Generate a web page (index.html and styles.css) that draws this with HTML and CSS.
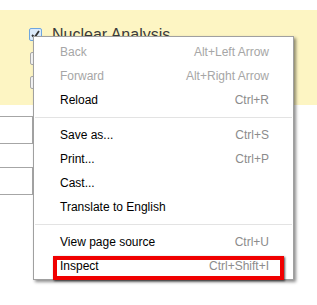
FILE: index.html
```html
<!DOCTYPE html>
<html lang="en">
<head>
    <meta charset="UTF-8">
    <meta name="viewport" content="width=device-width, initial-scale=1.0">
    <title>Context menu</title>
    <link rel="stylesheet" href="styles.css">
</head>
<body>
    <div class="page">
        <div class="panel">
            <label class="option">
                <span class="check checked">
                    <svg width="11" height="11" viewBox="0 0 11 11"><path d="M2 6 L4.5 8.5 L9 2" fill="none" stroke="#333" stroke-width="1.8"/></svg>
                </span>
                <span class="option-text">Nuclear Analysis</span>
            </label>
            <label class="option"><span class="check"></span></label>
            <label class="option"><span class="check"></span></label>
        </div>

        <div class="fields">
            <div class="field"></div>
            <div class="field"></div>
        </div>

        <div class="menu">
            <div class="item disabled"><span>Back</span><span class="key">Alt+Left Arrow</span></div>
            <div class="item disabled"><span>Forward</span><span class="key">Alt+Right Arrow</span></div>
            <div class="item"><span>Reload</span><span class="key">Ctrl+R</span></div>
            <div class="sep"></div>
            <div class="item"><span>Save as...</span><span class="key">Ctrl+S</span></div>
            <div class="item"><span>Print...</span><span class="key">Ctrl+P</span></div>
            <div class="item"><span>Cast...</span></div>
            <div class="item"><span>Translate to English</span></div>
            <div class="sep"></div>
            <div class="item"><span>View page source</span><span class="key">Ctrl+U</span></div>
            <div class="item"><span>Inspect</span><span class="key">Ctrl+Shift+I</span></div>
            <div class="highlight"></div>
        </div>
    </div>
</body>
</html>
```

FILE: styles.css
```css
* {
    margin: 0;
    padding: 0;
    box-sizing: border-box;
}

body {
    font-family: "Liberation Sans", Arial, sans-serif;
    background: #fff;
    overflow: hidden;
}

.page {
    position: relative;
    width: 317px;
    height: 305px;
    padding-top: 10px;
}

.panel {
    background: #fdf5c3;
    height: 95px;
    padding: 18px 0 0 29px;
    display: flex;
    flex-direction: column;
    gap: 11px;
}

.option {
    display: flex;
    align-items: center;
    gap: 10px;
    height: 13px;
}

.check {
    width: 13px;
    height: 13px;
    border: 1px solid #a8a8a8;
    border-radius: 2px;
    background: #f4f4f4;
    margin-left: 1px;
    display: flex;
    align-items: center;
    justify-content: center;
}

.check.checked {
    margin-left: 0;
    border-color: #6ea6e0;
    background: #dceafa;
}

.option-text {
    font-size: 16px;
    color: #3a3a3a;
}

.fields {
    display: flex;
    flex-direction: column;
    gap: 23px;
    margin-top: 11px;
}

.field {
    width: 40px;
    height: 28px;
    margin-left: -7px;
    border: 1px solid #a6a6a6;
    background: #fff;
}

.menu {
    position: absolute;
    left: 33px;
    top: 36px;
    width: 261px;
    height: 244px;
    background: #fff;
    border: 1px solid #a0a0a0;
    box-shadow: 2px 2px 3px rgba(0, 0, 0, 0.45);
    padding: 3px 0 0 0;
    font-size: 12px;
}

.item {
    height: 24px;
    display: flex;
    align-items: center;
    justify-content: space-between;
    padding: 0 24px 0 26px;
    color: #000;
}

.item.disabled {
    color: #a6a6a6;
}

.key {
    color: #8c8c8c;
}

.item.disabled .key {
    color: #a6a6a6;
}

.sep {
    height: 1px;
    background: #e3e3e3;
    margin: 5px 1px 5px 1px;
}

.highlight {
    position: absolute;
    left: 19px;
    top: 219px;
    width: 231px;
    height: 24px;
    border: 4px solid #f00000;
    box-shadow: 1px 1px 2px rgba(0, 0, 0, 0.7);
}
```
